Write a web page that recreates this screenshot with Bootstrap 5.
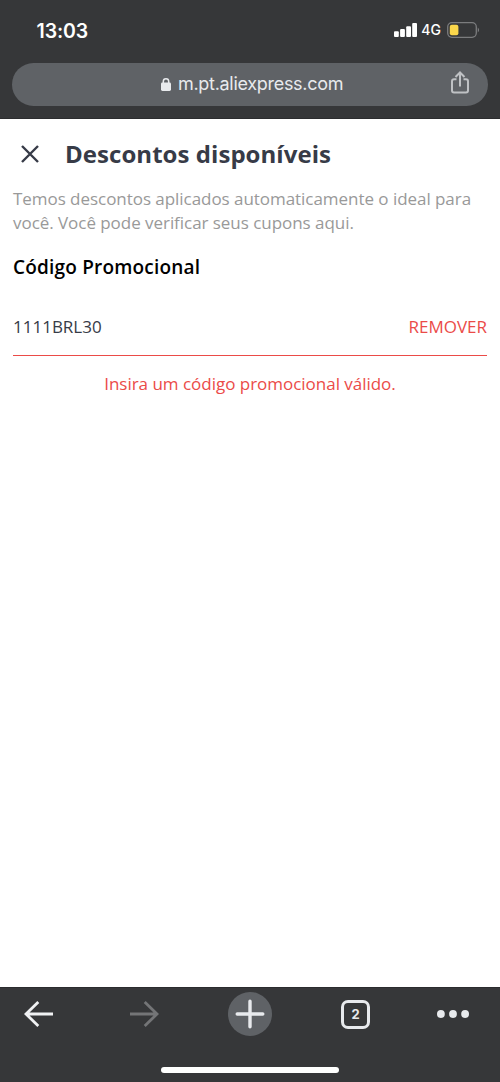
<!DOCTYPE html>
<html lang="pt-BR">
<head>
<meta charset="utf-8">
<meta name="viewport" content="width=device-width, initial-scale=1">
<title>Descontos disponíveis</title>
<link href="https://cdn.jsdelivr.net/npm/bootstrap@5.3.0/dist/css/bootstrap.min.css" rel="stylesheet">
<style>
body{font-family:"Open Sans","Noto Sans",sans-serif;color:#373b47;background:#fff}
svg{display:block;flex:none}
.chrome-ui{background:#363739;font-family:Inter,"Liberation Sans",sans-serif;color:#fff}
.top-ui{height:119px;border-bottom:1px solid #2c2d2f}
.status-line{height:63px;padding:0 20px 3px 36.500px}
.clock{font-size:19.500px;font-weight:600;line-height:24px;padding-top:1px;letter-spacing:-.1px}
.signal-label{font-size:14px;font-weight:500;line-height:18px;margin:0 6px 0 4px}
.address{height:43px;margin:0 12px;background:#5f6266;color:#e8eaed;padding:0 19px 0 149px}
.host{font-size:18px;line-height:24px;margin-left:7px;letter-spacing:-.3px;padding-bottom:1px}
.sheet-title{font-size:24px;font-weight:700;line-height:32px;margin:0 0 0 26px;letter-spacing:.05px}
.sheet-head{padding:19px 0 0 21px;height:68px}
.close-x{margin-top:6.500px}
.sheet-body{padding:0 13px}
.hint{font-size:17px;line-height:24px;color:#999;margin:0;letter-spacing:-.045px}
.code-label{font-size:19px;font-weight:600;line-height:28px;color:#000;margin:18px 0 0;letter-spacing:.19px}
.code-row{height:59px;padding-top:18px;border-bottom:1px solid #eb4b48;font-size:17px;line-height:24px}
.alert-red{color:#eb4b48}
.error-line{font-size:17px;line-height:24px;margin:16px 0 0;letter-spacing:-.02px}
.bottom-ui{height:95px;border-top:1px solid #2b2c2e}
.tool-row{height:52px;padding-left:24px}
.forward{margin-left:77px}
.new-tab{width:44px;height:44px;background:#5f6266;margin:0 69px}
.tab-count{width:29px;height:29px;border:3px solid #e8eaed;border-radius:7px;font-size:13px;font-weight:700;line-height:1;color:#e8eaed;margin-right:67px}
.home-bar{width:178px;height:6px;background:#fff;margin:26.500px auto 0}
</style>
</head>
<body class="d-flex flex-column vh-100 overflow-hidden">
<header class="chrome-ui top-ui">
  <div class="status-line d-flex align-items-center">
    <span class="clock me-auto">13:03</span>
    <svg width="23" height="14" viewBox="0 0 23 14" fill="#fff"><rect y="8.300" width="4.800" height="5.700" rx="1"/><rect x="6.100" y="6" width="4.800" height="8" rx="1"/><rect x="12.200" y="3.200" width="4.800" height="10.800" rx="1"/><rect x="18.200" width="4.800" height="14" rx="1"/></svg>
    <span class="signal-label">4G</span>
    <svg width="33" height="16" viewBox="0 0 33 16"><rect x=".7" y=".7" width="28.600" height="14.600" rx="4.200" fill="none" stroke="#7b7c7e" stroke-width="1.300"/><rect x="2.800" y="2.800" width="8.600" height="10.400" rx="2" fill="#fbd74b"/><path d="M30.800 5.500q2.200 2.500 0 5z" fill="#8b8c8e"/></svg>
  </div>
  <div class="address rounded-pill d-flex align-items-center">
    <svg width="10" height="13" viewBox="0 0 10 13"><rect y="4.500" width="10" height="8.500" rx="1.400" fill="#e8eaed"/><path d="M2.300 6V3.500a2.700 2.700 0 0 1 5.400 0V6" fill="none" stroke="#e8eaed" stroke-width="1.500"/></svg>
    <span class="host me-auto">m.pt.aliexpress.com</span>
    <svg class="mb-1" width="18" height="23" viewBox="0 0 18 23" fill="none" stroke="#bfc1c4" stroke-width="2"><path d="M5.500 8.200H3a2 2 0 0 0-2 2v9.300a2 2 0 0 0 2 2h12a2 2 0 0 0 2-2v-9.300a2 2 0 0 0-2-2h-2.500M9 15.500V2M4.500 6 9 1.500 13.500 6"/></svg>
  </div>
</header>
<main class="flex-grow-1">
  <div class="sheet-head d-flex align-items-start">
    <svg class="close-x" width="18" height="18" viewBox="0 0 18 18" stroke="#373b47" stroke-width="2.400"><path d="M1 1l16 16M17 1L1 17"/></svg>
    <h1 class="sheet-title">Descontos disponíveis</h1>
  </div>
  <div class="sheet-body">
    <p class="hint text-nowrap">Temos descontos aplicados automaticamente o ideal para<br>você. Você pode verificar seus cupons aqui.</p>
    <h2 class="code-label">Código Promocional</h2>
    <div class="code-row mt-3 d-flex justify-content-between"><span>1111BRL30</span><span class="alert-red">REMOVER</span></div>
    <p class="error-line alert-red text-center">Insira um código promocional válido.</p>
  </div>
</main>
<footer class="chrome-ui bottom-ui">
  <nav class="tool-row d-flex align-items-center">
    <svg width="29" height="26" viewBox="0 0 29 26" fill="none" stroke="#f0f1f3" stroke-width="2.800"><path d="M29 13H2M14.300 1 2 13l12.300 12"/></svg>
    <svg class="forward" width="29" height="26" viewBox="0 0 29 26" fill="none" stroke="#747577" stroke-width="2.800"><path d="M0 13h27M14.700 1 27 13 14.700 25"/></svg>
    <span class="new-tab rounded-circle d-flex align-items-center justify-content-center"><svg width="30" height="30" viewBox="0 0 30 30" stroke="#e8eaed" stroke-width="3.400" stroke-linecap="round"><path d="M15 2.200v25.600M2.200 15h25.600"/></svg></span>
    <span class="tab-count d-flex align-items-center justify-content-center">2</span>
    <svg width="32" height="8" viewBox="0 0 32 8" fill="#e8eaed"><circle cx="3.900" cy="4" r="3.900"/><circle cx="16" cy="4" r="3.900"/><circle cx="28.100" cy="4" r="3.900"/></svg>
  </nav>
  <div class="home-bar rounded-pill"></div>
</footer>
<script src="https://cdn.jsdelivr.net/npm/bootstrap@5.3.0/dist/js/bootstrap.bundle.min.js"></script>
</body>
</html>
